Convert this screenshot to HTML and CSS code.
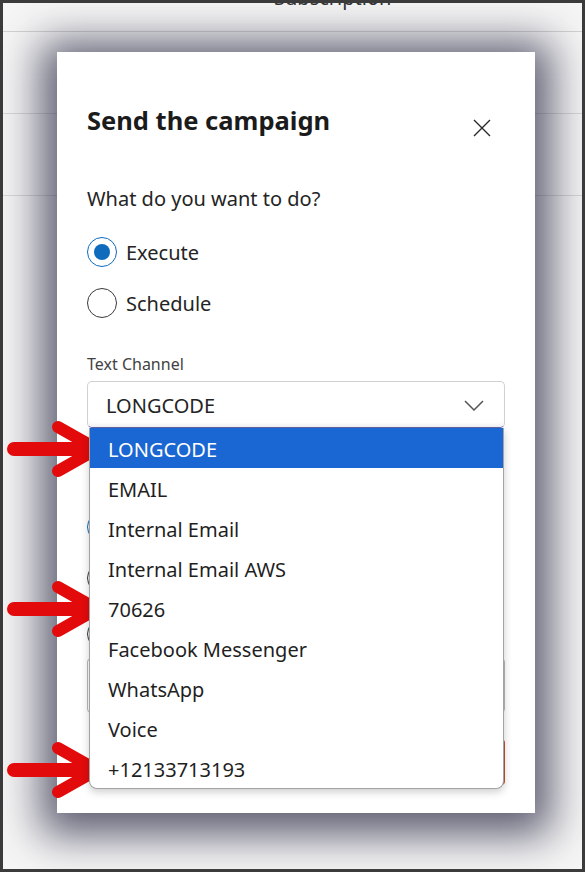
FILE: index.html
```html
<!DOCTYPE html>
<html>
<head>
  <title>Send the campaign</title>
  <meta name="viewport" content="width=device-width, initial-scale=1.0">
  <link rel="stylesheet" href="styles.css">
</head>
<body>
  <div class="screen">
    <div class="page">
      <div class="page-head"><span>Subscription</span></div>
      <div class="page-row"></div>
      <div class="page-row"></div>
    </div>

    <div class="modal">
      <div class="modal-head">
        <h2 class="modal-title">Send the campaign</h2>
        <button class="close" aria-label="Close">
          <svg width="18" height="18" viewBox="0 0 18 18"><path d="M1 1L17 17M17 1L1 17" stroke="#2b2b2b" stroke-width="1.4" fill="none"/></svg>
        </button>
      </div>

      <p class="question">What do you want to do?</p>
      <div class="radios">
        <label class="radio"><span class="dot on"></span>Execute</label>
        <label class="radio"><span class="dot"></span>Schedule</label>
      </div>

      <div class="field">
        <div class="field-label">Text Channel</div>
        <div class="select-wrap">
          <div class="select">
            <span>LONGCODE</span>
            <svg width="20" height="11" viewBox="0 0 20 11"><path d="M1 1L10 10L19 1" stroke="#555" stroke-width="1.5" fill="none"/></svg>
          </div>
          <ul class="options">
            <li class="active">LONGCODE</li>
            <li>EMAIL</li>
            <li>Internal Email</li>
            <li>Internal Email AWS</li>
            <li>70626</li>
            <li>Facebook Messenger</li>
            <li>WhatsApp</li>
            <li>Voice</li>
            <li>+12133713193</li>
          </ul>
        </div>
      </div>

      <!-- covered by the open list, only edges show -->
      <div class="behind">
        <span class="dot on"></span>
        <span class="dot"></span>
        <span class="dot"></span>
        <div class="fake-input"></div>
        <div class="actions"><button class="send">Send</button></div>
      </div>
    </div>
  </div>

  <svg class="arrows" width="585" height="872" viewBox="0 0 585 872">
    <g stroke="#e30a0b" fill="none" stroke-linecap="round" stroke-linejoin="round">
      <path d="M14 449H92" stroke-width="14"/>
      <path d="M58 427L97 449L58 471" stroke-width="12"/>
      <path d="M14 609H92" stroke-width="14"/>
      <path d="M58 587L97 609L58 631" stroke-width="12"/>
      <path d="M14 770H92" stroke-width="14"/>
      <path d="M58 748L97 770L58 792" stroke-width="12"/>
    </g>
  </svg>
</body>
</html>
```

FILE: styles.css
```css
* {
  box-sizing: border-box;
}
body {
  margin: 0;
  background: #3b3b3b;
  font-family: "Noto Sans", "Open Sans", sans-serif;
  color: #242424;
}
.screen {
  position: relative;
  margin: 3px;
  height: 866px;
  background: #f6f6f6;
  overflow: hidden;
}
.page-head {
  display: flow-root;
  height: 29px;
  border-bottom: 1px solid #d2d2d2;
}
.page-head span {
  display: block;
  margin-top: -17px;
  padding-left: 271px;
  font-size: 20px;
  line-height: 24px;
  color: #333;
}
.page-row {
  height: 82px;
  border-bottom: 1px solid #d8d8d8;
}

.modal {
  position: absolute;
  left: 54px;
  top: 49px;
  width: 478px;
  height: 761px;
  background: #fff;
  padding: 52px 30px 0;
  box-shadow: 0 6px 40px 16px rgba(50, 50, 75, 0.78);
}
.modal-head {
  display: flex;
  justify-content: space-between;
  align-items: flex-start;
  padding-right: 14px;
}
.modal-title {
  margin: 0;
  font-size: 25.5px;
  line-height: 32px;
  font-weight: 700;
  color: #1b1b1b;
}
.close {
  margin-top: 15px;
  padding: 0;
  width: 18px;
  height: 18px;
  border: 0;
  background: none;
  display: flex;
}
.question {
  margin: 48px 0 0;
  font-size: 20px;
  line-height: 28px;
}
.radios {
  margin-top: 24px;
  display: flex;
  flex-direction: column;
  gap: 21px;
}
.radio {
  display: flex;
  align-items: center;
  gap: 9px;
  height: 30px;
  font-size: 20px;
}
.dot {
  width: 30px;
  height: 30px;
  border-radius: 50%;
  border: 1.5px solid #3a3a3a;
  display: flex;
  align-items: center;
  justify-content: center;
  flex: none;
}
.dot.on {
  border-color: #0f6cbd;
}
.dot.on::after {
  content: "";
  width: 16px;
  height: 16px;
  border-radius: 50%;
  background: #0f6cbd;
}

.field {
  margin-top: 35px;
}
.field-label {
  font-size: 16px;
  line-height: 22px;
  color: #424242;
}
.select-wrap {
  position: relative;
  margin-top: 6px;
}
.select {
  height: 47px;
  border: 1px solid #d1d1d1;
  border-bottom-color: #6264a7;
  border-radius: 5px;
  padding: 2px 20px 0 18px;
  display: flex;
  align-items: center;
  justify-content: space-between;
  font-size: 20px;
  box-shadow: inset 0 -6px 6px -4px rgba(0, 0, 0, 0.05);
}
.options {
  position: absolute;
  top: 100%;
  left: 2px;
  right: 1px;
  margin: 0;
  padding: 0;
  list-style: none;
  background: #fff;
  border: 1px solid #a3a3a3;
  border-top: 0;
  border-radius: 0 0 8px 8px;
  box-shadow: 0 3px 8px rgba(0, 0, 0, 0.2);
  overflow: hidden;
  z-index: 5;
}
.options li {
  height: 40px;
  line-height: 40px;
  padding: 2px 0 0 18px;
  font-size: 20px;
  color: #1f1f1f;
}
.options li.active {
  background: #1a66d2;
  color: #fff;
}

.behind {
  margin-top: 84px;
  display: flex;
  flex-direction: column;
}
.behind .dot:nth-child(2) {
  margin-top: 21px;
}
.behind .dot:nth-child(3) {
  margin-top: 26px;
}
.fake-input {
  margin-top: 9px;
  height: 55px;
  border: 1px solid #b8b8b8;
  border-radius: 4px;
}
.actions {
  margin-top: 26px;
  display: flex;
  justify-content: flex-end;
}
.send {
  width: 140px;
  height: 46px;
  border: 0;
  border-radius: 4px;
  background: #c4502c;
  color: #fff;
  font-size: 18px;
}

.arrows {
  position: absolute;
  top: 0;
  left: 0;
  pointer-events: none;
}
```
